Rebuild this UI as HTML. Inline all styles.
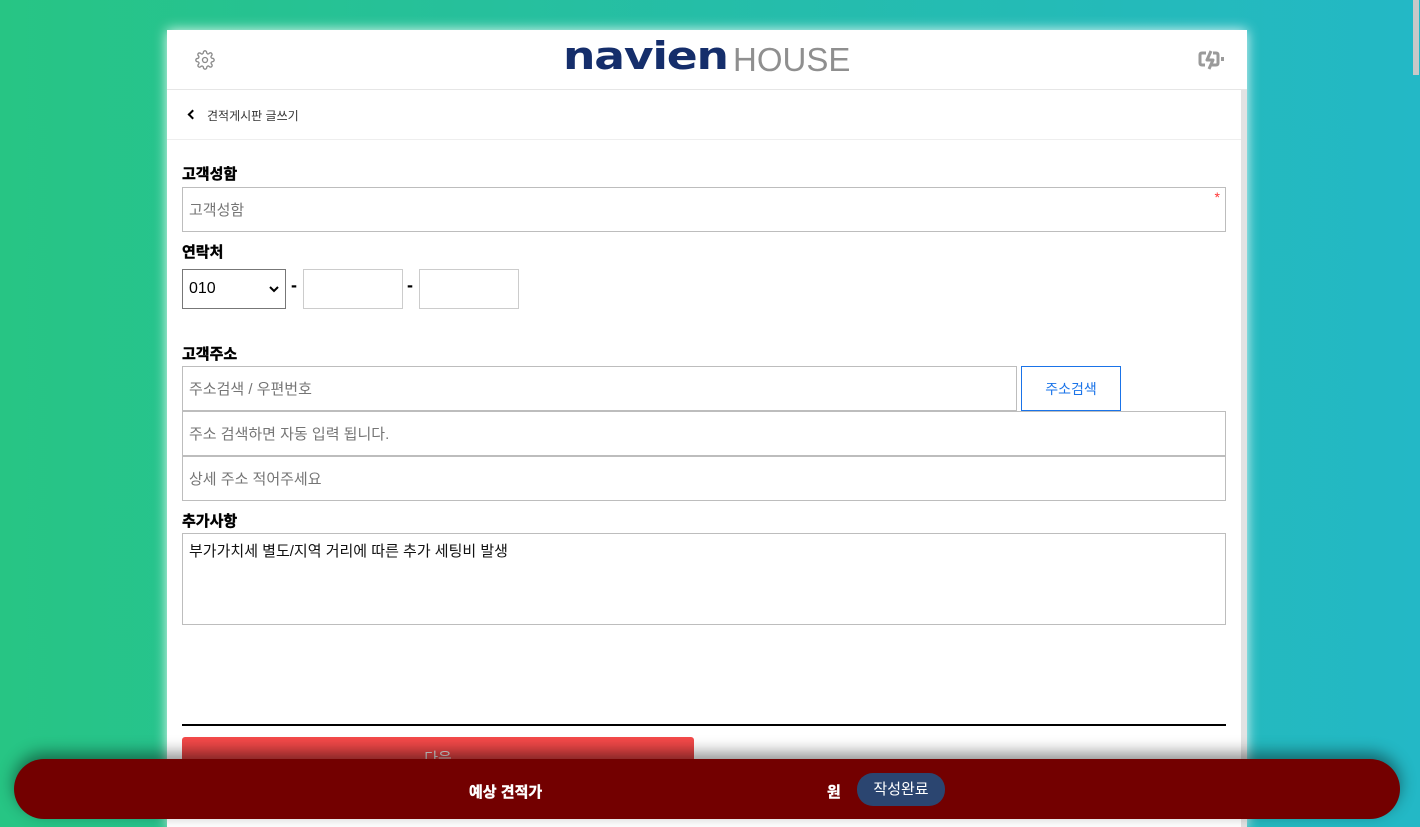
<!DOCTYPE html>
<html><head><meta charset="utf-8"><style>
*{box-sizing:border-box;margin:0;padding:0}
body{width:1420px;height:827px;overflow:hidden;background:linear-gradient(90deg,#27c584 0%,#25bdab 55%,#23b8c6 100%);font-family:"Liberation Sans","Noto Sans CJK KR",sans-serif;position:relative}
.card{position:absolute;left:167px;top:30px;width:1080px;height:797px;background:#fff;box-shadow:0 0 12px rgba(255,255,255,.9)}
.hdr{height:60px;border-bottom:1px solid #e6e6e6;position:relative}
.nv{position:absolute;left:396px;top:4px;font-size:38px;color:#152e6b;font-weight:900;font-family:"DejaVu Sans",sans-serif;transform:scaleX(1.2);transform-origin:left;letter-spacing:-1px}
.hs{position:absolute;left:566px;top:11px;font-size:33px;color:#8f8f8f}
.sub{height:50px;border-bottom:1px solid #eee;font-size:12px;color:#333;padding:17px 0 0 40px;position:relative;margin-right:6px}
.sub:before{content:"";position:absolute;left:22px;top:21px;width:5px;height:5px;border-left:2px solid #000;border-bottom:2px solid #000;transform:rotate(45deg)}
.sb{position:absolute;right:0;top:60px;width:6px;bottom:0;background:#e3e3e3}
.lbl{position:absolute;left:15px;font-size:15px;font-weight:700;color:#000;-webkit-text-stroke:.4px #000}
.in{position:absolute;border:1px solid #bdbdbd;font-size:15px;color:#757575;padding-left:6px;display:flex;align-items:center;background:#fff}
.pageSb{position:absolute;right:0;top:0;width:8px;height:827px;background:#23b8c6}
.pageSb i{position:absolute;left:1px;top:0;width:6px;height:75px;background:#c8c8c8}
.bar{position:absolute;left:14px;top:759px;width:1386px;height:60px;background:#730000;border-radius:30px;box-shadow:0 -6px 16px rgba(0,0,0,.45)}
</style></head><body>
<div class="pageSb"><i></i></div>
<div class="card">
 <div class="hdr">
  <svg style="position:absolute;left:28px;top:20px" width="20" height="20" viewBox="0 0 24 24" fill="none" stroke="#8a8a8a" stroke-width="1.6"><circle cx="12" cy="12" r="3"/><path d="M19.4 15a1.7 1.7 0 0 0 .3 1.8l.1.1a2 2 0 1 1-2.8 2.8l-.1-.1a1.7 1.7 0 0 0-1.8-.3 1.7 1.7 0 0 0-1 1.5V21a2 2 0 1 1-4 0v-.1a1.7 1.7 0 0 0-1.1-1.5 1.7 1.7 0 0 0-1.8.3l-.1.1a2 2 0 1 1-2.8-2.8l.1-.1a1.7 1.7 0 0 0 .3-1.800 1.7 1.7 0 0 0-1.5-1H3a2 2 0 1 1 0-4h.1a1.7 1.7 0 0 0 1.5-1.1 1.7 1.7 0 0 0-.3-1.8l-.1-.1a2 2 0 1 1 2.8-2.8l.1.1a1.7 1.7 0 0 0 1.8.3H9a1.7 1.7 0 0 0 1-1.5V3a2 2 0 1 1 4 0v.1a1.7 1.7 0 0 0 1 1.5 1.7 1.7 0 0 0 1.8-.3l.1-.1a2 2 0 1 1 2.8 2.8l-.1.1a1.7 1.7 0 0 0-.3 1.8V9a1.7 1.7 0 0 0 1.5 1H21a2 2 0 1 1 0 4h-.1a1.7 1.7 0 0 0-1.5 1z"/></svg>
  <div class="nv">navien</div>
  <div class="hs">HOUSE</div>
  <svg style="position:absolute;left:1030px;top:18px" width="28" height="24" viewBox="0 0 28 24" fill="none" stroke="#9a9a9a" stroke-width="3" stroke-linejoin="round"><path d="M9 5H5Q3 5 3 7v8q0 2 2 2h3M16 5h3q2 0 2 2v8q0 2-2 2h-4M14 3l-4 9h6l-4 9"/><path d="M25.5 9v4"/></svg>
 </div>
 <div class="sub">견적게시판 글쓰기</div>
 <div class="sb"></div>
 <div class="lbl" style="top:133px">고객성함</div>
 <div class="in" style="left:15px;top:157px;width:1044px;height:45px">고객성함<span style="position:absolute;right:5px;top:1px;color:#f33;font-size:14px">*</span></div>
 <div class="lbl" style="top:211px">연락처</div>
 <div class="in" style="left:15px;top:239px;width:104px;height:40px;border-color:#777;color:#000;font-size:16px">010<svg style="position:absolute;right:6px;top:15px" width="10" height="8" viewBox="0 0 10 8"><path d="M1 2l4 4 4-4" fill="none" stroke="#000" stroke-width="2"/></svg></div>
 <div style="position:absolute;left:124px;top:245px;font-weight:900;font-size:18px">-</div>
 <div class="in" style="left:136px;top:239px;width:100px;height:40px;border-color:#ccc"></div>
 <div style="position:absolute;left:240px;top:245px;font-weight:900;font-size:18px">-</div>
 <div class="in" style="left:252px;top:239px;width:100px;height:40px;border-color:#ccc"></div>
 <div class="lbl" style="top:313px">고객주소</div>
 <div class="in" style="left:15px;top:336px;width:835px;height:45px">주소검색 / 우편번호</div>
 <div class="in" style="left:854px;top:336px;width:100px;height:45px;border-color:#1a73e8;color:#1a73e8;justify-content:center;padding:0;font-size:14px">주소검색</div>
 <div class="in" style="left:15px;top:381px;width:1044px;height:45px">주소 검색하면 자동 입력 됩니다.</div>
 <div class="in" style="left:15px;top:426px;width:1044px;height:45px">상세 주소 적어주세요</div>
 <div class="lbl" style="top:480px">추가사항</div>
 <div class="in" style="left:15px;top:503px;width:1044px;height:92px;align-items:flex-start;padding-top:6px;color:#111;font-size:15px">부가가치세 별도/지역 거리에 따른 추가 세팅비 발생</div>
 <div style="position:absolute;left:15px;top:694px;width:1044px;height:2px;background:#000"></div>
 <div style="position:absolute;left:15px;top:707px;width:512px;height:40px;background:linear-gradient(#f54a4a,#c93838);border-radius:3px;color:#ddd;text-align:center;padding-top:10px;font-size:15px">다음</div>
</div>
<div class="bar">
 <div style="position:absolute;left:455px;top:22px;color:#fff;font-weight:700;font-size:15px;-webkit-text-stroke:.4px #fff">예상 견적가</div>
 <div style="position:absolute;left:813px;top:22px;color:#fff;font-weight:700;font-size:15px;-webkit-text-stroke:.4px #fff">원</div>
 <div style="position:absolute;left:843px;top:14px;width:88px;height:33px;border-radius:16px;background:#2b4570;color:#fff;font-size:15px;text-align:center;line-height:33px">작성완료</div>
</div>
</body></html>
